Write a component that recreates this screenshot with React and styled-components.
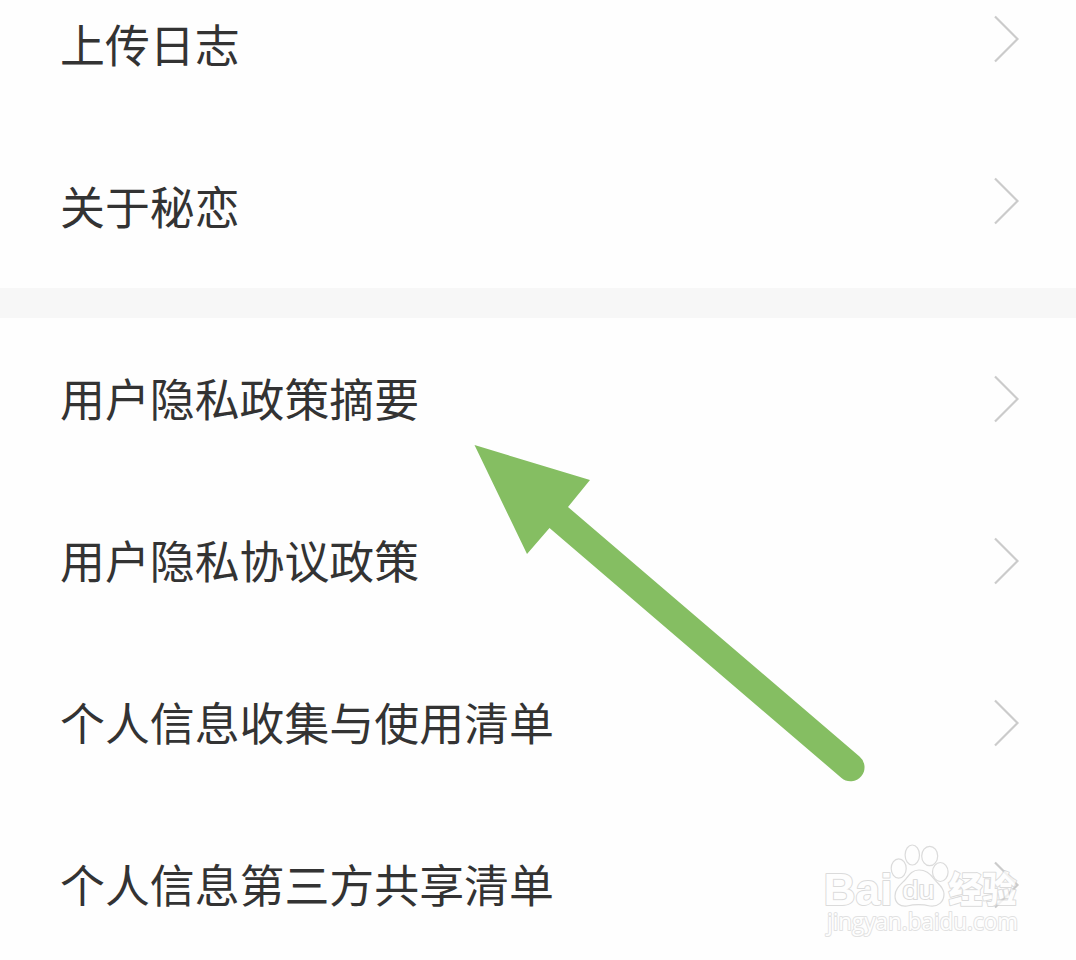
import React from 'react';
import styled, {createGlobalStyle} from "styled-components";

const GlobalStyle = createGlobalStyle`
    body {
        margin: 0;
        background: #fefefe;
        font-family: "Noto Sans CJK SC", sans-serif;
    }
`;
const Page = styled.main`
    position: relative;
    width: 1076px;
    height: 960px;
    overflow: hidden;
    background: #fefefe;
`;
const Group = styled.section`
    display: flex;
    flex-direction: column;
    justify-content: ${props => props.$clipped ? 'flex-end' : 'flex-start'};
    height: ${props => props.$clipped ? '288px' : '642px'};
`;
const Divider = styled.div`
    height: 30px;
    background: #f7f7f7;
`;
const Row = styled.div`
    display: flex;
    flex: none;
    align-items: center;
    justify-content: space-between;
    box-sizing: border-box;
    height: 162px;
    padding: 0 56px 0 60px;
`;
const Label = styled.span`
    margin-bottom: 2px;
    color: #333;
    font-size: 44.900px;
    line-height: 64px;
    white-space: nowrap;
`;
const Chevron = styled.svg`
    width: 26px;
    height: 48px;
    margin-bottom: ${props => props.$raised ? '12px' : '0'};
    fill: none;
    stroke: #cbcbcb;
    stroke-width: 2.2;
`;
const Arrow = styled.svg`
    position: absolute;
    left: 470px;
    top: 440px;
    width: 400px;
    height: 346px;
    fill: #85be62;
`;
const Watermark = styled.svg`
    position: absolute;
    left: 816px;
    top: 836px;
    width: 214px;
    height: 112px;
    opacity: 0.75;
    fill: #fefefe;
    stroke: #d0d0d0;
    stroke-width: 1.2;
    stroke-linejoin: round;
`;
const Brand = styled.text`
    font-family: "Liberation Sans", sans-serif;
    font-weight: ${props => props.$weight};
    font-size: ${props => props.$size}px;
    stroke-width: 2;
    paint-order: stroke;
`;
const BrandCn = styled.text`
    font-family: "Noto Sans CJK SC", sans-serif;
    font-weight: 900;
    font-size: 36px;
    stroke-width: 2;
    paint-order: stroke;
`;
const Site = styled.text`
    font-family: "Open Sans", sans-serif;
    font-weight: 400;
    font-size: 24px;
    stroke: #d8d8d8;
    stroke-width: 2;
    paint-order: stroke;
`;

const appItems = ['上传日志', '关于秘恋'];
const privacyItems = ['用户隐私政策摘要', '用户隐私协议政策', '个人信息收集与使用清单', '个人信息第三方共享清单'];

const Item = ({text, raised}) => (
    <Row>
        <Label>{text}</Label>
        <Chevron viewBox="0 0 26 48" $raised={raised}>
            <path d="M1 1.5L23.500 24L1 46.5"/>
        </Chevron>
    </Row>
);

const App = () => (
    <Page>
        <GlobalStyle/>
        <Group $clipped>
            {appItems.map(text => <Item key={text} text={text} raised/>)}
        </Group>
        <Divider/>
        <Group>
            {privacyItems.map(text => <Item key={text} text={text}/>)}
        </Group>

        <Arrow viewBox="470 440 400 346">
            <path d="M474.500 445L590 480L568 507L859.500 756.500A14 14 0 0 1 841.500 778L549.500 528L527 554Z"/>
        </Arrow>

        <Watermark viewBox="816 836 214 112">
            <Brand $size={45} $weight={700} x="823.500" y="904.500" textLength="69" lengthAdjust="spacingAndGlyphs">Bai</Brand>
            <ellipse cx="898.700" cy="868.500" rx="7.500" ry="9.700"/>
            <ellipse cx="912.300" cy="855" rx="7.200" ry="10"/>
            <ellipse cx="929.700" cy="856" rx="8" ry="9.700"/>
            <ellipse cx="940.300" cy="872" rx="7.800" ry="9.500"/>
            <path d="M919 870C912 870 909 875 905 880C900 885 895 889 895 896C895 903 900 907 907 906C915 904 922 904 930 906C938 907 944 902 944 894C944 887 938 884 934 879C930 873 926 870 919 870Z"/>
            <Brand $size={25} $weight={400} x="902.500" y="899" textLength="32" lengthAdjust="spacingAndGlyphs">du</Brand>
            <BrandCn x="948.500" y="903" textLength="68" lengthAdjust="spacingAndGlyphs">经验</BrandCn>
            <Site x="827" y="930" textLength="191" lengthAdjust="spacingAndGlyphs">jingyan.baidu.com</Site>
        </Watermark>
    </Page>
);

export default App;
